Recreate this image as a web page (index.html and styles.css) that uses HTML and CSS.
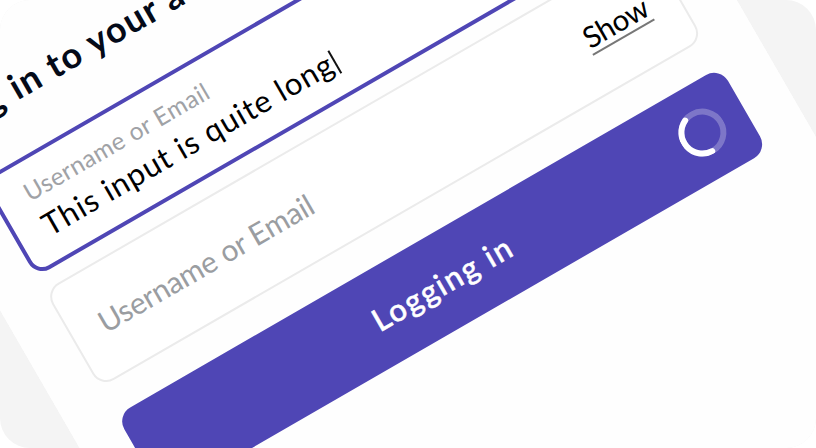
FILE: index.html
```html
<!DOCTYPE html>
<html lang="en">
<head>
<meta charset="utf-8">
<title>Log in</title>
<link rel="stylesheet" href="styles.css">
</head>
<body>
<main class="scene">
  <form class="card">
    <h1 class="title">Log in to your account</h1>
    <div class="fields">
      <div class="field field-active">
        <span class="label">Username or Email</span>
        <span class="value"><span class="typed">This input is quite long</span><i class="caret"></i></span>
      </div>
      <div class="field field-idle">
        <span class="placeholder">Username or Email</span>
        <a class="show">Show</a>
      </div>
    </div>
    <div class="button">
      <span class="button-text">Logging in</span>
      <svg class="spinner" viewBox="0 0 48 48">
        <circle class="track" cx="24" cy="24" r="21"/>
        <path class="arc" d="M23.3 45A21 21 0 0 1 15.1 5"/>
      </svg>
    </div>
  </form>
</main>
</body>
</html>
```

FILE: styles.css
```css
* { box-sizing: border-box; }
body { margin: 0; background: #fff; overflow: hidden; font-family: Lato, "Open Sans", sans-serif; }
.scene { width: 816px; height: 448px; overflow: hidden; border-radius: 30px; background: #f4f4f4; }
.card {
  width: 793px; height: 900px; margin: 0 0 0 -155px; padding: 58px 48px;
  background: #fefefe; transform: rotate(-30deg); transform-origin: 155px 0;
  box-shadow: 0 -60px #fefefe;
}
.title { margin: 0 0 41px; font-size: 36px; line-height: 48px; font-weight: 700; color: #040a18; white-space: nowrap; letter-spacing: 1.5px; }
.fields { display: grid; gap: 16px; }
.field { display: flex; height: 111.4px; border-radius: 16px; background: #fff; white-space: nowrap; }
.field-active { flex-direction: column; padding: 14px 28px; border: 4px solid #4f46b5; }
.field-idle { align-items: center; justify-content: space-between; padding: 0 31px 0 30px; border: 2px solid #ebebeb; }
.label { font-size: 24.5px; line-height: 32px; letter-spacing: 0.5px; color: #a0a2a6; }
.value { display: flex; align-items: center; margin-top: 1.4px; font-size: 31px; line-height: 40px; letter-spacing: 1px; color: #000; }
.caret { width: 2px; height: 26px; margin: 5px 0 0 2px; background: #111; }
.placeholder { font-size: 30px; line-height: 40px; letter-spacing: -0.2px; color: #9a9da1; }
.show { margin-bottom: 4px; font-size: 29.5px; line-height: 32px; letter-spacing: -0.3px; border-bottom: 2px solid #777; color: #000; }
.button {
  display: grid; grid-template-columns: 48px 1fr 48px; align-items: center; height: 96px; margin-top: 32px; padding: 0 24px;
  border-radius: 16px; background: #4f46b5; color: #fff;
}
.button-text { grid-column: 2; text-align: center; font-size: 31px; font-weight: 500; line-height: 40px; letter-spacing: 1.9px; -webkit-text-stroke: 0.5px #fff; }
.spinner { width: 48px; height: 48px; fill: none; stroke: #fff; stroke-width: 6; stroke-linecap: round; }
.track { stroke: #7d76c8; }
```
